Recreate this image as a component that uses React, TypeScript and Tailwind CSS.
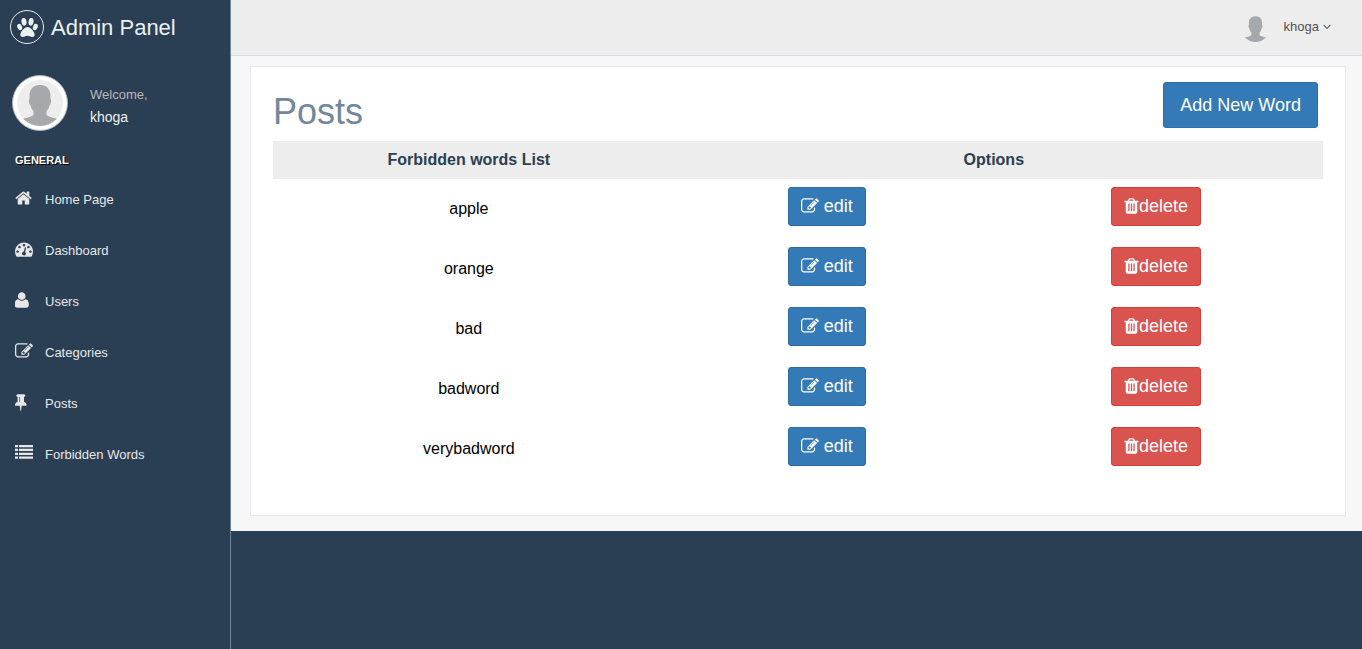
import React from "react";

type IconProps = { className?: string };

type GlyphProps = IconProps & { viewBox: string; d: string };

function Glyph({ className = "", viewBox, d }: GlyphProps) {
  return (
    <svg viewBox={viewBox} fill="currentColor" aria-hidden="true" className={className}>
      <path d={d} />
    </svg>
  );
}

const PawIcon = ({ className = "" }: IconProps) => (
  <svg viewBox="0 0 63 57" fill="currentColor" aria-hidden="true" className={className}>
    <ellipse cx="21" cy="11.5" rx="7.500" ry="11.500" transform="rotate(-10 21 11.5)" />
    <ellipse cx="42" cy="11.5" rx="7.500" ry="11.500" transform="rotate(10 42 11.5)" />
    <ellipse cx="8" cy="27" rx="7" ry="10" transform="rotate(-22 8 27)" />
    <ellipse cx="55" cy="27" rx="7" ry="10" transform="rotate(22 55 27)" />
    <path d="M31.500 27c-9 0-21.500 14-21.500 23.500 0 5 3 6.500 7.500 6.500 5 0 9-3.500 14-3.500s9 3.500 14 3.500c4.500 0 7.500-1.500 7.500-6.500 0-9.500-12.500-23.500-21.500-23.500z" />
  </svg>
);

const HomeIcon = () => (
  <Glyph
    className="h-[18px] w-[17px]"
    viewBox="64 0 1664 1792"
    d="M1472 992v480q0 26-19 45t-45 19h-384v-384h-256v384h-384q-26 0-45-19t-19-45v-480q0-1 .5-3t.5-3l575-474 575 474q1 2 1 6zm223-69l-62 74q-8 9-21 11h-3q-13 0-21-7l-692-577-692 577q-12 8-24 7-13-2-21-11l-62-74q-8-10-7-23.5t11-21.5l719-599q32-26 76-26t76 26l244 204v-195q0-14 9-23t23-9h192q14 0 23 9t9 23v408l219 182q10 8 11 21.5t-7 23.5z"
  />
);

const DashboardIcon = () => (
  <Glyph
    className="h-[18px] w-[18px]"
    viewBox="0 0 1792 1792"
    d="M384 1152q0-53-37.5-90.5t-90.5-37.5-90.5 37.5-37.5 90.5 37.5 90.5 90.5 37.5 90.5-37.5 37.5-90.5zm192-448q0-53-37.5-90.5t-90.5-37.5-90.5 37.5-37.5 90.5 37.5 90.5 90.5 37.5 90.5-37.5 37.5-90.5zm428 481l101-382q6-26-7.5-48.5t-38.5-29.5-48 6.5-30 39.5l-101 382q-60 5-107 43.5t-63 98.5q-20 77 20 146t117 89 146-20 89-117q16-60-6-117t-72-91zm660-33q0-53-37.5-90.5t-90.5-37.5-90.5 37.5-37.5 90.5 37.5 90.5 90.5 37.5 90.5-37.5 37.5-90.5zm-640-640q0-53-37.5-90.5t-90.5-37.5-90.5 37.5-37.5 90.5 37.5 90.5 90.5 37.5 90.5-37.5 37.5-90.5zm448 192q0-53-37.5-90.5t-90.5-37.5-90.5 37.5-37.5 90.5 37.5 90.5 90.5 37.5 90.5-37.5 37.5-90.5zm320 448q0 261-141 483-19 29-54 29h-1402q-35 0-54-29-141-221-141-483 0-182 71-348t191-286 286-191 348-71 348 71 286 191 191 286 71 348z"
  />
);

const UserIcon = () => (
  <Glyph
    className="h-[18px] w-[14px]"
    viewBox="224 0 1394 1792"
    d="M1600 1405q0 120-73 189.5t-194 69.5h-874q-121 0-194-69.5t-73-189.5q0-53 3.500-103.500t14-109 26.500-108.500 43-97.500 62-81 85.500-53.500 111.500-20q9 0 42 21.500t74.500 48 108 48 133.500 21.500 133.500-21.500 108-48 74.500-48 42-21.500q61 0 111.500 20t85.500 53.500 62 81 43 97.500 26.500 108.500 14 109 3.500 103.500zm-320-893q0 159-112.500 271.500t-271.500 112.500-271.500-112.500-112.500-271.500 112.500-271.500 271.500-112.500 271.500 112.500 112.500 271.500z"
  />
);

const EditIcon = () => (
  <Glyph
    className="h-[18px] w-[18px]"
    viewBox="0 0 1792 1792"
    d="M888 1184l116-116-152-152-116 116v56h96v96h56zm440-720q-16-16-33 1l-350 350q-17 17-1 33t33-1l350-350q17-17 1-33zm80 594v190q0 119-84.5 203.5t-203.5 84.5h-832q-119 0-203.5-84.5t-84.5-203.5v-832q0-119 84.5-203.5t203.5-84.5h832q63 0 117 25 15 7 18 23 3 17-9 29l-49 49q-14 14-32 8-23-6-45-6h-832q-66 0-113 47t-47 113v832q0 66 47 113t113 47h832q66 0 113-47t47-113v-126q0-13 9-22l64-64q15-15 35-7t20 29zm-96-738l288 288-672 672h-288v-288zm444 132l-92 92-288-288 92-92q28-28 68-28t68 28l152 152q28 28 28 68t-28 68z"
  />
);

const PinIcon = () => (
  <Glyph
    className="h-[18px] w-[12px]"
    viewBox="320 0 1195 1792"
    d="M800 864v-448q0-14-9-23t-23-9-23 9-9 23v448q0 14 9 23t23 9 23-9 9-23zm672 352q0 26-19 45t-45 19h-429l-51 483q-2 12-10.5 20.5t-20.5 8.5h-1q-27 0-32-27l-76-485h-404q-26 0-45-19t-19-45q0-123 78.5-221.5t177.5-98.5v-512q-52 0-90-38t-38-90 38-90 90-38h640q52 0 90 38t38 90-38 90-90 38v512q99 0 177.5 98.5t78.5 221.5z"
  />
);

const ListIcon = () => (
  <Glyph
    className="h-[18px] w-[18px]"
    viewBox="0 0 18 18"
    d="M0 1h3v2.300h-3zM4 1h14v2.300h-14zM0 4.800h3v2.300h-3zM4 4.800h14v2.300h-14zM0 8.700h3v2.300h-3zM4 8.700h14v2.300h-14zM0 12.500h3v2.300h-3zM4 12.500h14v2.300h-14z"
  />
);

const TrashIcon = () => (
  <Glyph
    className="h-[18px] w-[15px]"
    viewBox="149 0 1494 1792"
    d="M704 1376v-704q0-14-9-23t-23-9h-64q-14 0-23 9t-9 23v704q0 14 9 23t23 9h64q14 0 23-9t9-23zm256 0v-704q0-14-9-23t-23-9h-64q-14 0-23 9t-9 23v704q0 14 9 23t23 9h64q14 0 23-9t9-23zm256 0v-704q0-14-9-23t-23-9h-64q-14 0-23 9t-9 23v704q0 14 9 23t23 9h64q14 0 23-9t9-23zm-544-992h448l-48-117q-7-9-17-11h-317q-10 2-17 11zm928 32v64q0 14-9 23t-23 9h-96v948q0 83-47 143.5t-113 60.5h-832q-66 0-113-58.5t-47-141.5v-952h-96q-14 0-23-9t-9-23v-64q0-14 9-23t23-9h309l70-167q15-37 54-63t79-26h320q40 0 79 26t54 63l70 167h309q14 0 23 9t9 23z"
  />
);

const AngleDownIcon = () => (
  <Glyph
    className="h-[13px] w-[8px]"
    viewBox="345 0 1102 1792"
    d="M1395 736q0 13-10 23l-466 466q-10 10-23 10t-23-10l-466-466q-10-10-10-23t10-23l50-50q10-10 23-10t23 10l393 393 393-393q10-10 23-10t23 10l50 50q10 10 10 23z"
  />
);

function Avatar({ className = "" }: IconProps) {
  return (
    <svg viewBox="0 0 46 46" aria-hidden="true" className={`rounded-full ${className}`}>
      <rect width="46" height="46" fill="#ededed" />
      <path
        d="M23 5c-7 0-10.500 4.500-10.500 11v3c-.9.600-.8 4.500.8 6 .6 2.500 1.500 4.500 3.200 6v3.500c0 1.500-3 2.500-11.500 4.500v7h36v-7c-8.500-2-11.500-3-11.500-4.500v-3.500c1.700-1.500 2.600-3.500 3.200-6 1.600-1.500 1.700-5.400.8-6v-3c0-6.500-3.500-11-10.500-11z"
        fill="#a5a9ac"
      />
    </svg>
  );
}

const navItems = [
  { label: "Home Page", icon: <HomeIcon /> },
  { label: "Dashboard", icon: <DashboardIcon /> },
  { label: "Users", icon: <UserIcon /> },
  { label: "Categories", icon: <EditIcon /> },
  { label: "Posts", icon: <PinIcon /> },
  { label: "Forbidden Words", icon: <ListIcon /> },
];

const words = ["apple", "orange", "bad", "badword", "verybadword"];

function Sidebar() {
  return (
    <aside className="w-[231px] shrink-0 border-r border-[#73879c]">
      <a href="#" className="flex h-[54px] items-center gap-[7px] pl-[10px] text-[22px] text-[#ecf0f1]">
        <span className="flex h-[34px] w-[34px] items-center justify-center rounded-full border border-[#eaeaea]">
          <PawIcon className="h-[19px] w-[21px]" />
        </span>
        Admin Panel
      </a>

      <div className="flex items-center gap-[22px] pt-[21px] pl-3">
        <Avatar className="h-14 w-14 border border-[#aab4be] bg-white p-1" />
        <div className="pt-[6px]">
          <p className="text-[13px] leading-[22px] text-[#bab8b8]">Welcome,</p>
          <h2 className="text-sm leading-[22px] text-[#ecf0f1]">khoga</h2>
        </div>
      </div>

      <nav className="pt-[21px]" aria-labelledby="nav-heading">
        <h3
          id="nav-heading"
          className="pl-[15px] text-[11px] leading-4 font-bold text-white uppercase [text-shadow:1px_1px_#000]"
        >
          General
        </h3>
        <ul className="pt-[6px]">
          {navItems.map((item) => (
            <li key={item.label}>
              <a href="#" className="flex h-[51px] items-center pl-[15px] text-[13px] text-[#e7e7e7]">
                <span className="w-[30px] pb-1">{item.icon}</span>
                {item.label}
              </a>
            </li>
          ))}
        </ul>
      </nav>
    </aside>
  );
}

function TopBar() {
  return (
    <header className="flex h-14 items-center justify-end border-b border-[#d9dee4] bg-[#ededed] pr-[31px]">
      <button type="button" className="flex items-center text-[13px] text-[#515356]">
        <Avatar className="mr-[14px] h-[29px] w-[29px]" />
        <span className="flex items-center gap-1 pb-[2px]">
          khoga
          <AngleDownIcon />
        </span>
      </button>
    </header>
  );
}

function WordsTable() {
  return (
    <table className="w-full table-fixed text-center text-base text-black">
      <colgroup>
        <col className="w-[37.3%]" />
        <col className="w-[30.9%]" />
        <col className="w-[31.8%]" />
      </colgroup>
      <thead className="bg-[#ededed] text-[#2a3f54]">
        <tr className="h-[38px]">
          <th scope="col">Forbidden words List</th>
          <th scope="col" colSpan={2}>
            Options
          </th>
        </tr>
      </thead>
      <tbody>
        {words.map((word) => (
          <tr key={word} className="h-[60px]">
            <td>{word}</td>
            <td className="pt-2 align-top">
              <button
                type="button"
                className="inline-flex h-[39px] items-center gap-[5px] rounded-[3px] border border-[#2e6da4] bg-[#337ab7] px-3 pb-[2px] text-lg text-white"
              >
                <EditIcon />
                edit
              </button>
            </td>
            <td className="pt-2 align-top">
              <button
                type="button"
                className="inline-flex h-[39px] items-center rounded-[3px] border border-[#d43f3a] bg-[#d9534f] px-3 pb-[2px] text-lg text-white"
              >
                <TrashIcon />
                delete
              </button>
            </td>
          </tr>
        ))}
      </tbody>
    </table>
  );
}

export default function App() {
  return (
    <div className="flex min-h-screen bg-[#2a3f54] font-['Liberation_Sans',Arial,sans-serif]">
      <Sidebar />
      <div className="min-w-0 flex-1">
        <TopBar />
        <main className="bg-[#f7f7f7] pt-[10px] pr-4 pb-[15px] pl-[19px]">
          <section className="border border-[#e6e9ed] bg-white px-[22px] pt-[15px] pb-[36px]">
            <div className="flex items-start justify-between pr-[5px] pb-[9px]">
              <h1 className="pt-[10px] text-4xl leading-10 text-[#73879c]">Posts</h1>
              <button
                type="button"
                className="h-[46px] rounded-[3px] border border-[#2e6da4] bg-[#337ab7] px-4 text-lg text-white"
              >
                Add New Word
              </button>
            </div>
            <WordsTable />
          </section>
        </main>
      </div>
    </div>
  );
}
